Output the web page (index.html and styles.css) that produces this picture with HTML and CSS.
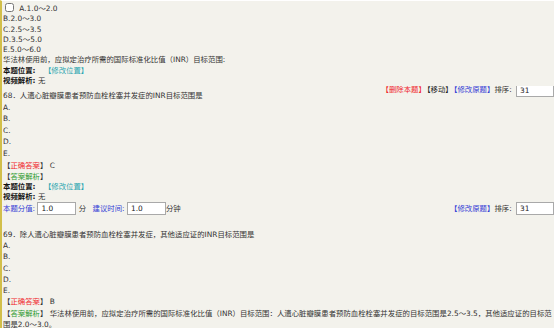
FILE: index.html
```html
<!DOCTYPE html>
<html lang="zh-CN">
<head>
    <meta charset="UTF-8">
    <title>试题管理</title>
    <link rel="stylesheet" href="styles.css">
</head>
<body>

    <div class="page">

        <div class="item">
            <div class="line"><input type="checkbox" class="chk"> A.1.0～2.0</div>
            <div class="line">B.2.0～3.0</div>
            <div class="line">C.2.5～3.5</div>
            <div class="line">D.3.5～5.0</div>
            <div class="line">E.5.0～6.0</div>
            <div class="line">华法林使用前，应拟定治疗所需的国际标准化比值（INR）目标范围:</div>
            <div class="line"><b>本题位置:</b> <a class="teal">【修改位置】</a></div>
            <div class="line"><b>视频解析:</b> 无</div>
        </div>

        <div class="item">
            <div class="tools">
                <a class="red">【删除本题】</a><a class="dark">【移动】</a><a class="blue">【修改原题】</a>排序: <input type="text" class="sort" value="31">
            </div>
            <div class="title">68．人遗心脏瓣膜患者预防血栓栓塞并发症的INR目标范围是</div>
            <div class="opt">A.</div>
            <div class="opt">B.</div>
            <div class="opt">C.</div>
            <div class="opt">D.</div>
            <div class="opt">E.</div>
            <div class="answer">【<span class="red">正确答案</span>】 C</div>
            <div class="answer">【<span class="green">答案解析</span>】</div>
            <div class="line"><b>本题位置:</b> <a class="teal">【修改位置】</a></div>
            <div class="line"><b>视频解析:</b> 无</div>
            <div class="score-row">
                <div class="score">
                    <span class="blue">本题分值:</span> <input type="text" class="num" value="1.0"> 分
                    <span class="blue gap">建议时间:</span> <input type="text" class="num" value="1.0">分钟
                </div>
                <div class="score-tools">
                    <a class="blue">【修改原题】</a>排序: <input type="text" class="sort" value="31">
                </div>
            </div>
        </div>

        <div class="item next">
            <div class="title">69．除人遗心脏瓣膜患者预防血栓栓塞并发症，其他适应证的INR目标范围是</div>
            <div class="opt">A.</div>
            <div class="opt">B.</div>
            <div class="opt">C.</div>
            <div class="opt">D.</div>
            <div class="opt">E.</div>
            <div class="answer">【<span class="red">正确答案</span>】 B</div>
            <div class="answer">【<span class="green">答案解析</span>】 华法林使用前，应拟定治疗所需的国际标准化比值（INR）目标范围：人遗心脏瓣膜患者预防血栓栓塞并发症的目标范围是2.5～3.5，其他适应证的目标范围是2.0～3.0。</div>
        </div>

    </div>

</body>
</html>
```

FILE: styles.css
```css
body {
    margin: 0;
    padding: 0;
    background: #f3f2ec;
    font-family: "DejaVu Sans", "Noto Sans CJK SC", sans-serif;
    font-size: 7.4px;
    color: #333;
    overflow: hidden;
}

.page {
    border-left: 2px solid #d2bf4a;
    border-top: 1px solid #ffffff;
    padding: 2px 0 0 1px;
    min-height: 328px;
}

.line {
    line-height: 10.3px;
}

.answer {
    line-height: 11.2px;
}

.chk {
    width: 9px;
    height: 9px;
    margin: 0 3px 0 2px;
    vertical-align: -1px;
}

b {
    color: #111;
}

a {
    cursor: pointer;
}

.teal {
    color: #2ba6b0;
    margin-left: 6px;
}

.red {
    color: #f0262b;
}

.dark {
    color: #222;
}

.blue {
    color: #3340d6;
}

.green {
    color: #2d9a2d;
}

.item {
    overflow: hidden;
}

.tools {
    float: right;
    margin-top: -3px;
    line-height: 13px;
}

.tools .red,
.tools .dark {
    margin-right: 1px;
}

.title {
    padding-top: 5px;
    line-height: 10.3px;
}

.opt {
    line-height: 11.6px;
}

.sort {
    width: 30px;
    height: 11px;
    padding: 0 3px;
    margin-left: 2px;
    font: inherit;
    border: 1px solid #a9a9a9;
    background: #fff;
    color: #222;
    vertical-align: middle;
}

.score-row {
    display: flex;
    justify-content: space-between;
    align-items: center;
    height: 12px;
}

.num {
    width: 31px;
    height: 11px;
    padding: 0 3px;
    font: inherit;
    border: 1px solid #a9a9a9;
    background: #fff;
    color: #222;
    vertical-align: middle;
}

.gap {
    margin-left: 4px;
}

.next .title {
    padding-top: 15px;
}

.next .opt {
    line-height: 11.3px;
}
```
